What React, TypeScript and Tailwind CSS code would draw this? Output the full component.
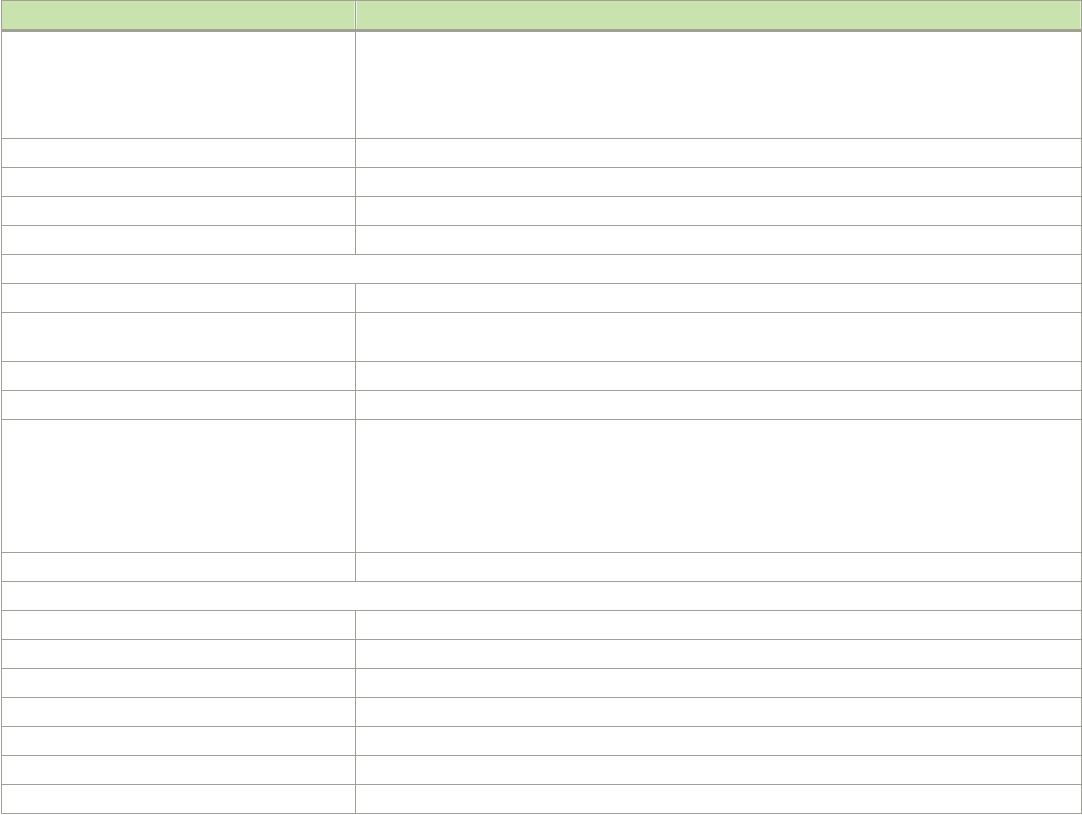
import React from "react";

const ROWS: { h: number; merged?: boolean }[] = [
  { h: 106 },
  { h: 28 },
  { h: 28 },
  { h: 28 },
  { h: 28 },
  { h: 28, merged: true },
  { h: 28 },
  { h: 48 },
  { h: 28 },
  { h: 28 },
  { h: 132 },
  { h: 28 },
  { h: 28, merged: true },
  { h: 28 },
  { h: 28 },
  { h: 28 },
  { h: 28 },
  { h: 28 },
  { h: 28 },
  { h: 28 },
];

export default function App() {
  return (
    <div className="w-[1082px] h-[815px] bg-white font-['Liberation_Sans',sans-serif]">
      <div className="ml-[1px] w-[1081px] border border-[#a0a096] flex flex-col">
        {/* Header */}
        <div className="flex h-[31px] border-b-[3px] border-[#a0a096] bg-[#c8e3ad]">
          <div className="w-[353px] border-r border-[#e6f1dc]" />
          <div className="w-px bg-[#a0a096]" />
          <div className="flex-1 border-l border-r border-[#e6f1dc]" />
        </div>

        {/* Body */}
        {ROWS.map((r, i) => (
          <div
            key={i}
            className={`flex ${i < ROWS.length - 1 ? "border-b border-[#a0a096]" : ""}`}
            style={{ height: r.h + (i < ROWS.length - 1 ? 1 : 0) }}
          >
            {r.merged ? (
              <div className="flex-1" />
            ) : (
              <>
                <div className="w-[353px]" />
                <div className="w-px bg-[#a0a096]" />
                <div className="flex-1" />
              </>
            )}
          </div>
        ))}
      </div>
    </div>
  );
}
